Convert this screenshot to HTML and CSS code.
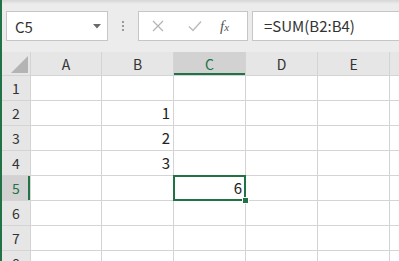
FILE: index.html
```html
<!DOCTYPE html>
<html>
<head>
    <title>Excel</title>
    <link rel="stylesheet" href="styles.css">
</head>
<body>
    <div class="app">
        <div class="formula-bar">
            <div class="name-box">
                <span class="name-text">C5</span>
                <svg class="arrow" width="8" height="5" viewBox="0 0 8 5"><path d="M0 0H8L4 4.5Z" fill="#6a6a6a"/></svg>
            </div>
            <div class="grip"><i></i><i></i><i></i></div>
            <div class="buttons">
                <svg class="btn-icon" width="12" height="12" viewBox="0 0 12 12"><path d="M1 1L11 11M11 1L1 11" stroke="#b5b5b5" stroke-width="1.3" fill="none"/></svg>
                <svg class="btn-icon" width="14" height="12" viewBox="0 0 14 12"><path d="M1 6.5L5 10.5L13 1.5" stroke="#bcbcbc" stroke-width="1.5" fill="none"/></svg>
                <span class="fx"><i>f</i><i class="x">x</i></span>
            </div>
            <div class="formula">=SUM(B2:B4)</div>
        </div>

        <div class="sheet">
            <div class="corner"><span class="tri"></span></div>
            <div class="col-head">A</div>
            <div class="col-head">B</div>
            <div class="col-head active">C</div>
            <div class="col-head">D</div>
            <div class="col-head">E</div>
            <div class="col-head"></div>

            <div class="row-head">1</div><div class="cell"></div><div class="cell"></div><div class="cell"></div><div class="cell"></div><div class="cell"></div><div class="cell"></div>
            <div class="row-head">2</div><div class="cell"></div><div class="cell">1</div><div class="cell"></div><div class="cell"></div><div class="cell"></div><div class="cell"></div>
            <div class="row-head">3</div><div class="cell"></div><div class="cell">2</div><div class="cell"></div><div class="cell"></div><div class="cell"></div><div class="cell"></div>
            <div class="row-head">4</div><div class="cell"></div><div class="cell">3</div><div class="cell"></div><div class="cell"></div><div class="cell"></div><div class="cell"></div>
            <div class="row-head active">5</div><div class="cell"></div><div class="cell"></div><div class="cell selected">6<span class="handle"></span></div><div class="cell"></div><div class="cell"></div><div class="cell"></div>
            <div class="row-head">6</div><div class="cell"></div><div class="cell"></div><div class="cell"></div><div class="cell"></div><div class="cell"></div><div class="cell"></div>
            <div class="row-head">7</div><div class="cell"></div><div class="cell"></div><div class="cell"></div><div class="cell"></div><div class="cell"></div><div class="cell"></div>
            <div class="row-head">8</div><div class="cell"></div><div class="cell"></div><div class="cell"></div><div class="cell"></div><div class="cell"></div><div class="cell"></div>
        </div>
    </div>
</body>
</html>
```

FILE: styles.css
```css
body {
    margin: 0;
    width: 399px;
    height: 261px;
    overflow: hidden;
    font-family: "Noto Sans CJK JP", "Noto Sans", sans-serif;
    background: #e8e8e8;
}

.app {
    border-left: 2px solid #217346;
    height: 261px;
    background: linear-gradient(#d6d6d6, #ececec 4px, #ececec);
}

/* formula bar */
.formula-bar {
    display: flex;
    align-items: center;
    height: 30px;
    padding: 11px 0 9px 4px;
}

.name-box {
    width: 99px;
    height: 28px;
    background: #fff;
    border: 1px solid #c6c6c6;
    display: flex;
    align-items: center;
    justify-content: space-between;
    padding: 0 6px 0 8px;
    box-sizing: border-box;
    width: 102px;
    height: 30px;
}

.name-text {
    font-size: 15px;
    color: #333;
}

.grip {
    width: 30px;
    display: flex;
    flex-direction: column;
    align-items: center;
    gap: 2px;
}

.grip i {
    width: 2px;
    height: 2px;
    background: #9a9a9a;
}

.buttons {
    width: 110px;
    height: 30px;
    box-sizing: border-box;
    background: #fff;
    border: 1px solid #c6c6c6;
    display: flex;
    align-items: center;
    padding-left: 13px;
    gap: 24px;
}

.fx {
    font-family: "Liberation Serif", serif;
    font-size: 15px;
    color: #555;
    margin-left: -6px;
}

.fx .x {
    font-size: 11px;
}

.formula {
    flex: 1;
    height: 30px;
    box-sizing: border-box;
    margin-left: 4px;
    background: #fff;
    border: 1px solid #c6c6c6;
    border-right: none;
    padding-left: 11px;
    font-size: 15px;
    line-height: 28px;
    color: #333;
}

/* sheet grid */
.sheet {
    display: grid;
    grid-template-columns: 28px 70px 71px 71px 71px 71px 20px;
    grid-auto-rows: 24px;
    grid-template-rows: 23px;
    gap: 1px;
    background: #d4d4d4;
    margin-top: 2px;
}

.corner {
    background: #e6e6e6;
    position: relative;
}

.tri {
    position: absolute;
    right: 2px;
    bottom: 2px;
    width: 0;
    height: 0;
    border-left: 17px solid transparent;
    border-bottom: 17px solid #b4b4b4;
}

.col-head, .row-head {
    background: #e6e6e6;
    color: #333;
    font-size: 14px;
    display: flex;
    align-items: center;
    justify-content: center;
}

.col-head.active {
    background: #d2d2d2;
    color: #217346;
    box-shadow: inset 0 -2px #217346;
}

.row-head.active {
    background: #d2d2d2;
    color: #217346;
    box-shadow: inset -2px 0 #217346;
}

.cell {
    background: #fff;
    font-size: 15px;
    color: #222;
    text-align: right;
    padding-right: 3px;
    line-height: 24px;
}

.cell.selected {
    position: relative;
    outline: 2px solid #217346;
    outline-offset: -1px;
    z-index: 1;
}

.handle {
    position: absolute;
    right: -4px;
    bottom: -4px;
    width: 5px;
    height: 5px;
    background: #217346;
    border: 1px solid #fff;
}
```
